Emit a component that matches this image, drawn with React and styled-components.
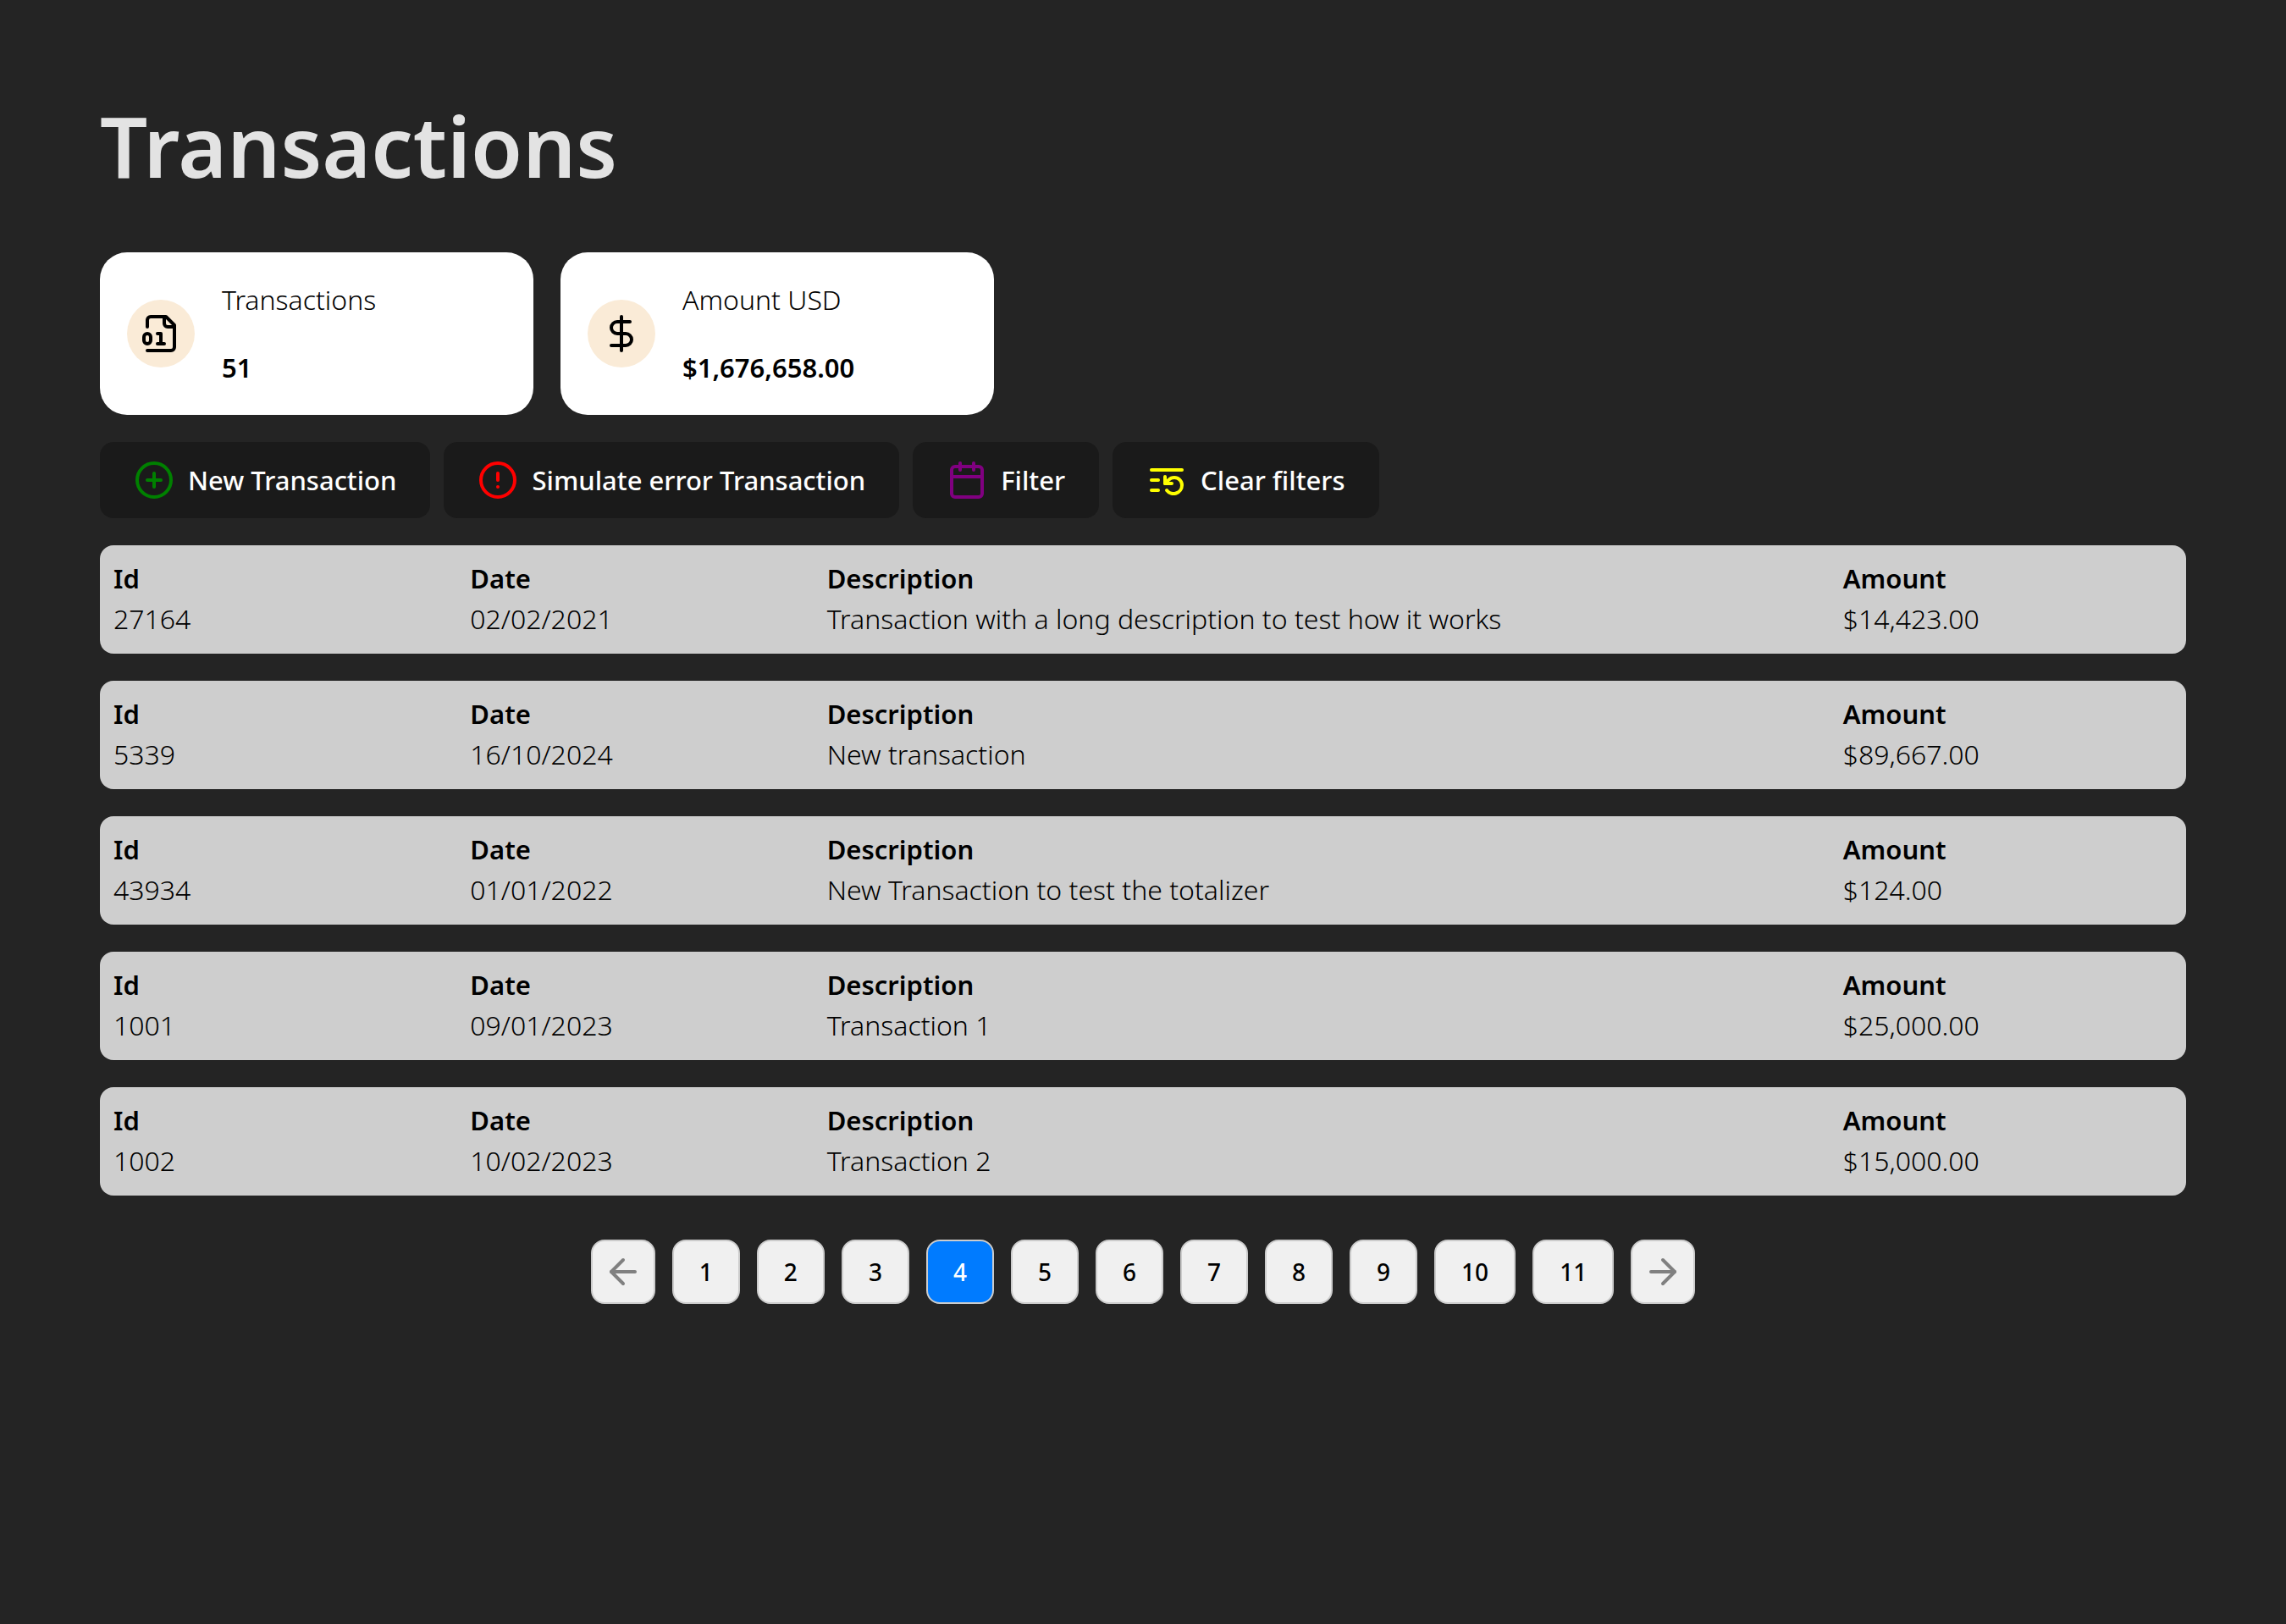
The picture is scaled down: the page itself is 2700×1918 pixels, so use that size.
import React from "react";
import styled, { createGlobalStyle } from "styled-components";

const GlobalStyle = createGlobalStyle`
  *, *::before, *::after {
    box-sizing: border-box;
  }

  body {
    margin: 0;
    background: #242424;
    color: #000;
    font-family: "Noto Sans", "Open Sans", sans-serif;
    font-size: 32px;
    font-weight: 300;
    line-height: 48px;
  }

  h1, p, dl, dt, dd, ul {
    margin: 0;
    padding: 0;
  }

  button {
    font-family: inherit;
    cursor: pointer;
  }
`;

const Page = styled.main`
  min-height: 100vh;
  padding: 116px 118px;
`;

const Title = styled.h1`
  margin-bottom: 70px;
  color: #e3e3e3;
  font-size: 99px;
  font-weight: 600;
  line-height: 112px;
`;

const Totals = styled.section`
  display: flex;
  flex-wrap: wrap;
  gap: 32px;
`;

const TotalCard = styled.article`
  display: flex;
  align-items: center;
  gap: 32px;
  width: 512px;
  padding: 32px;
  border-radius: 32px;
  background: #fff;
`;

const IconCircle = styled.span`
  display: flex;
  align-items: center;
  justify-content: center;
  flex: none;
  width: 80px;
  height: 80px;
  border-radius: 50%;
  background: #faebd7;
`;

const TotalText = styled.div`
  display: flex;
  flex-direction: column;
  gap: 32px;
`;

const TotalValue = styled.p`
  font-size: 31px;
  font-weight: 600;
`;

const Toolbar = styled.div`
  display: flex;
  flex-wrap: wrap;
  gap: 16px;
  margin: 32px 0;
`;

const ToolButton = styled.button`
  display: flex;
  align-items: center;
  gap: 16px;
  padding: 19px 38px;
  border: 2px solid transparent;
  border-radius: 16px;
  background: #1a1a1a;
  color: #fff;
  font-size: 31px;
  font-weight: 500;
  line-height: 48px;
`;

const Svg = styled.svg`
  display: block;
  flex: none;
  width: 48px;
  height: 48px;
  fill: none;
  stroke: ${(p) => p.$color};
  stroke-width: 2;
  stroke-linecap: round;
  stroke-linejoin: round;
`;

const TransactionList = styled.ul`
  display: flex;
  flex-direction: column;
  gap: 32px;
  list-style: none;
`;

const TransactionRow = styled.li`
  padding: 15px 16px 17px;
  border-radius: 16px;
  background: #cecece;
`;

const Fields = styled.dl`
  display: grid;
  grid-template-columns: 1fr 1fr 3fr 1fr;
  gap: 32px;
`;

const FieldLabel = styled.dt`
  font-size: 31px;
  font-weight: 600;
`;

const Pagination = styled.nav`
  display: flex;
  justify-content: center;
  gap: 20px;
  margin-top: 52px;
`;

const PageButton = styled.button`
  padding: 12px 30px;
  border: 2px solid #ccc;
  border-radius: 16px;
  background: ${(p) => (p.$active ? "#007bff" : "#f0f0f0")};
  color: ${(p) => (p.$active ? "#fff" : "#000")};
  font-size: 28px;
  font-weight: 500;
  line-height: 48px;
`;

const ArrowButton = styled(PageButton)`
  padding: 12px;
`;

function Icon({ color = "#000", children }) {
  return (
    <Svg viewBox="0 0 24 24" aria-hidden="true" $color={color}>
      {children}
    </Svg>
  );
}

const FileDigitIcon = () => (
  <Icon>
    <path d="M4 22h14a2 2 0 0 0 2-2V7l-5-5H6a2 2 0 0 0-2 2v4" />
    <path d="M14 2v4a2 2 0 0 0 2 2h4" />
    <rect width="4" height="6" x="2" y="12" rx="2" />
    <path d="M10 12h2v6" />
    <path d="M10 18h4" />
  </Icon>
);

const DollarIcon = () => (
  <Icon>
    <path d="M12 2v20" />
    <path d="M17 5H9.5a3.5 3.5 0 0 0 0 7h5a3.5 3.5 0 0 1 0 7H6" />
  </Icon>
);

const PlusCircleIcon = () => (
  <Icon color="green">
    <circle cx="12" cy="12" r="10" />
    <path d="M8 12h8" />
    <path d="M12 8v8" />
  </Icon>
);

const AlertCircleIcon = () => (
  <Icon color="red">
    <circle cx="12" cy="12" r="10" />
    <path d="M12 8v4" />
    <path d="M12 16h.01" />
  </Icon>
);

const CalendarIcon = () => (
  <Icon color="purple">
    <path d="M8 2v4" />
    <path d="M16 2v4" />
    <rect width="18" height="18" x="3" y="4" rx="2" />
    <path d="M3 10h18" />
  </Icon>
);

const ListRestartIcon = () => (
  <Icon color="yellow">
    <path d="M21 6H3" />
    <path d="M7 12H3" />
    <path d="M7 18H3" />
    <path d="M12 18a5 5 0 0 0 9-3 4.5 4.5 0 0 0-4.5-4.5c-1.33 0-2.54.54-3.41 1.41L11 14" />
    <path d="M11 10v4h4" />
  </Icon>
);

const ArrowLeftIcon = () => (
  <Icon color="gray">
    <path d="m12 19-7-7 7-7" />
    <path d="M19 12H5" />
  </Icon>
);

const ArrowRightIcon = () => (
  <Icon color="gray">
    <path d="M5 12h14" />
    <path d="m12 5 7 7-7 7" />
  </Icon>
);

const totals = [
  { label: "Transactions", value: "51", Glyph: FileDigitIcon },
  { label: "Amount USD", value: "$1,676,658.00", Glyph: DollarIcon },
];

const actions = [
  { label: "New Transaction", Glyph: PlusCircleIcon },
  { label: "Simulate error Transaction", Glyph: AlertCircleIcon },
  { label: "Filter", Glyph: CalendarIcon },
  { label: "Clear filters", Glyph: ListRestartIcon },
];

const transactions = [
  {
    Id: "27164",
    Date: "02/02/2021",
    Description: "Transaction with a long description to test how it works",
    Amount: "$14,423.00",
  },
  { Id: "5339", Date: "16/10/2024", Description: "New transaction", Amount: "$89,667.00" },
  { Id: "43934", Date: "01/01/2022", Description: "New Transaction to test the totalizer", Amount: "$124.00" },
  { Id: "1001", Date: "09/01/2023", Description: "Transaction 1", Amount: "$25,000.00" },
  { Id: "1002", Date: "10/02/2023", Description: "Transaction 2", Amount: "$15,000.00" },
];

const pages = [1, 2, 3, 4, 5, 6, 7, 8, 9, 10, 11];
const currentPage = 4;

export default function App() {
  return (
    <>
      <GlobalStyle />
      <Page>
        <Title>Transactions</Title>

        <Totals>
          {totals.map(({ label, value, Glyph }) => (
            <TotalCard key={label}>
              <IconCircle>
                <Glyph />
              </IconCircle>
              <TotalText>
                <p>{label}</p>
                <TotalValue>{value}</TotalValue>
              </TotalText>
            </TotalCard>
          ))}
        </Totals>

        <Toolbar>
          {actions.map(({ label, Glyph }) => (
            <ToolButton type="button" key={label}>
              <Glyph />
              {label}
            </ToolButton>
          ))}
        </Toolbar>

        <TransactionList>
          {transactions.map((transaction) => (
            <TransactionRow key={transaction.Id}>
              <Fields>
                {Object.entries(transaction).map(([name, value]) => (
                  <div key={name}>
                    <FieldLabel>{name}</FieldLabel>
                    <dd>{value}</dd>
                  </div>
                ))}
              </Fields>
            </TransactionRow>
          ))}
        </TransactionList>

        <Pagination aria-label="Pagination">
          <ArrowButton type="button" aria-label="Previous page">
            <ArrowLeftIcon />
          </ArrowButton>
          {pages.map((page) => (
            <PageButton
              type="button"
              key={page}
              $active={page === currentPage}
              aria-current={page === currentPage ? "page" : undefined}
            >
              {page}
            </PageButton>
          ))}
          <ArrowButton type="button" aria-label="Next page">
            <ArrowRightIcon />
          </ArrowButton>
        </Pagination>
      </Page>
    </>
  );
}
